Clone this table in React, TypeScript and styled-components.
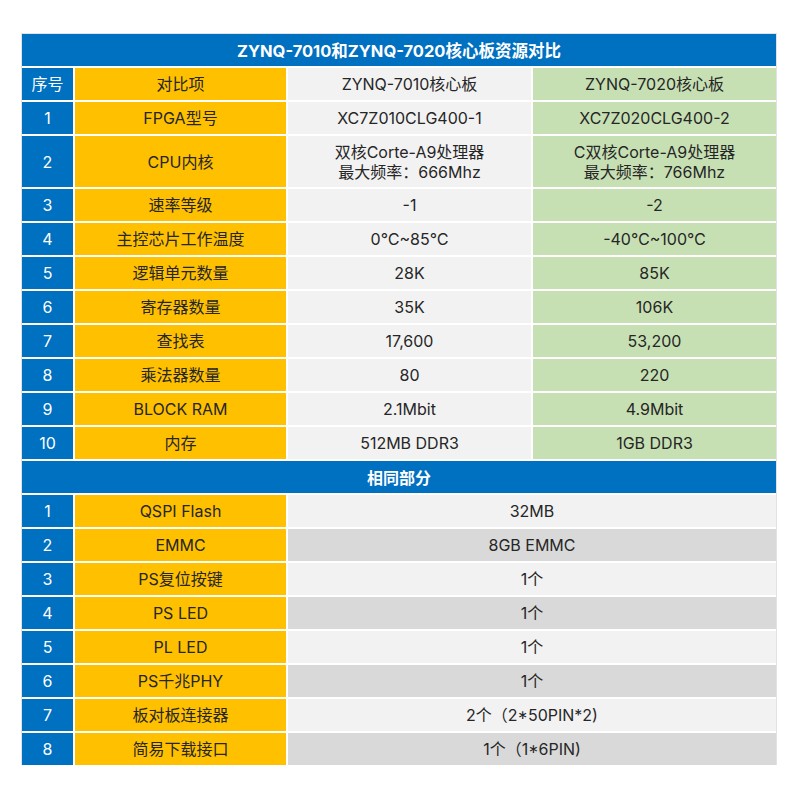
import React from "react";
import styled, { createGlobalStyle } from "styled-components";

const Global = createGlobalStyle`
  html, body { margin: 0; padding: 0; background: #ffffff; }
  body { font-family: Inter, "Noto Sans CJK SC", sans-serif; }
`;

const Page = styled.div`
  width: 800px;
  height: 800px;
  padding: 33px 0 0 21px;
  box-sizing: border-box;
`;

const Table = styled.div`
  display: grid;
  grid-template-columns: 51px 211px 243px 243px;
  grid-template-rows: 32px 32px 32px 51px;
  grid-auto-rows: 32px;
  gap: 2px;
  width: 754px;
  border: 1px solid #e2e2e2;
  border-bottom: none;
  background: #ffffff;
`;

type Tone = "blue" | "yellow" | "light" | "green" | "gray";

const toneBg: Record<Tone, string> = {
  blue: "#0070c0",
  yellow: "#ffc000",
  light: "#f2f2f2",
  green: "#c6e0b4",
  gray: "#d9d9d9",
};

const Cell = styled.div<{ $tone: Tone; $span?: number }>`
  background: ${(p) => toneBg[p.$tone]};
  color: ${(p) => (p.$tone === "blue" ? "#ffffff" : "#262626")};
  grid-column: span ${(p) => p.$span ?? 1};
  display: flex;
  flex-direction: column;
  align-items: center;
  justify-content: center;
  font-size: 16px;
  line-height: 20px;
  font-weight: 400;
  text-align: center;
  white-space: nowrap;
`;

const Line = styled.span`
  display: block;
  height: 20px;
  line-height: 20px;
`;

const Banner = styled.div<{ $size: number }>`
  grid-column: 1 / -1;
  background: #0070c0;
  color: #ffffff;
  display: flex;
  align-items: center;
  justify-content: center;
  font-size: ${(p) => p.$size}px;
  font-weight: 700;
`;

const Row = styled.div`
  display: contents;
`;

type DiffRow = { n: string; label: string; a: string[]; b: string[] };

const diffRows: DiffRow[] = [
  { n: "1", label: "FPGA型号", a: ["XC7Z010CLG400-1"], b: ["XC7Z020CLG400-2"] },
  {
    n: "2",
    label: "CPU内核",
    a: ["双核Corte-A9处理器", "最大频率：666Mhz"],
    b: ["C双核Corte-A9处理器", "最大频率：766Mhz"],
  },
  { n: "3", label: "速率等级", a: ["-1"], b: ["-2"] },
  { n: "4", label: "主控芯片工作温度", a: ["0℃~85℃"], b: ["-40℃~100℃"] },
  { n: "5", label: "逻辑单元数量", a: ["28K"], b: ["85K"] },
  { n: "6", label: "寄存器数量", a: ["35K"], b: ["106K"] },
  { n: "7", label: "查找表", a: ["17,600"], b: ["53,200"] },
  { n: "8", label: "乘法器数量", a: ["80"], b: ["220"] },
  { n: "9", label: "BLOCK RAM", a: ["2.1Mbit"], b: ["4.9Mbit"] },
  { n: "10", label: "内存", a: ["512MB DDR3"], b: ["1GB DDR3"] },
];

const sameRows: { n: string; label: string; v: string }[] = [
  { n: "1", label: "QSPI Flash", v: "32MB" },
  { n: "2", label: "EMMC", v: "8GB EMMC" },
  { n: "3", label: "PS复位按键", v: "1个" },
  { n: "4", label: "PS LED", v: "1个" },
  { n: "5", label: "PL LED", v: "1个" },
  { n: "6", label: "PS千兆PHY", v: "1个" },
  { n: "7", label: "板对板连接器", v: "2个（2*50PIN*2)" },
  { n: "8", label: "简易下载接口", v: "1个（1*6PIN)" },
];

export default function App() {
  return (
    <>
      <Global />
      <Page>
        <Table>
          <Banner $size={16.5}>ZYNQ-7010和ZYNQ-7020核心板资源对比</Banner>
          <Cell $tone="blue">序号</Cell>
          <Cell $tone="yellow">对比项</Cell>
          <Cell $tone="light">ZYNQ-7010核心板</Cell>
          <Cell $tone="green">ZYNQ-7020核心板</Cell>
          {diffRows.map((r) => (
            <Row key={"d" + r.n}>
              <Cell $tone="blue">{r.n}</Cell>
              <Cell $tone="yellow">{r.label}</Cell>
              <Cell $tone="light">
                {r.a.map((t) => (
                  <Line key={t}>{t}</Line>
                ))}
              </Cell>
              <Cell $tone="green">
                {r.b.map((t) => (
                  <Line key={t}>{t}</Line>
                ))}
              </Cell>
            </Row>
          ))}
          <Banner $size={16}>相同部分</Banner>
          {sameRows.map((r, i) => (
            <Row key={"s" + r.n}>
              <Cell $tone="blue">{r.n}</Cell>
              <Cell $tone="yellow">{r.label}</Cell>
              <Cell $tone={i % 2 === 0 ? "light" : "gray"} $span={2}>
                {r.v}
              </Cell>
            </Row>
          ))}
        </Table>
      </Page>
    </>
  );
}
